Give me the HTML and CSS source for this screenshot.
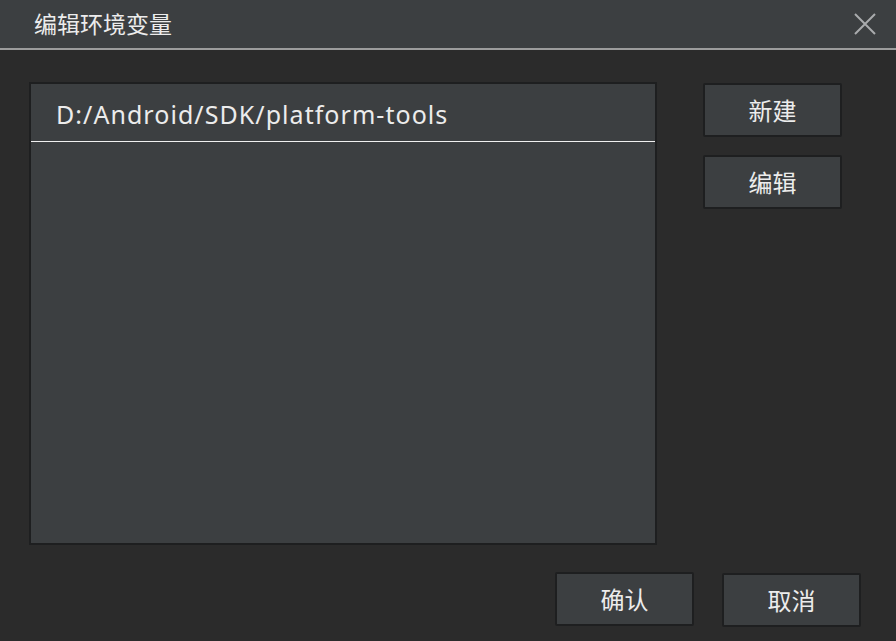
FILE: index.html
```html
<!DOCTYPE html>
<html lang="zh">
<head>
<meta charset="utf-8">
<link rel="stylesheet" href="styles.css">
</head>
<body>
<div class="dialog">
  <header class="titlebar">
    <span class="title">编辑环境变量</span>
    <svg class="close" width="22" height="22" viewBox="0 0 22 22"><path d="M1 1 L21 21 M21 1 L1 21" stroke="#a9abad" stroke-width="2" fill="none"/></svg>
  </header>
  <main class="body">
    <div class="list">
      <div class="row">D:/Android/SDK/platform-tools</div>
    </div>
    <div class="side">
      <button class="btn">新建</button>
      <button class="btn">编辑</button>
    </div>
  </main>
  <footer class="footer">
    <button class="btn">确认</button>
    <button class="btn btn-cancel">取消</button>
  </footer>
</div>
</body>
</html>
```
FILE: styles.css
```css
* { box-sizing: border-box; }
html, body { margin: 0; padding: 0; }
body {
  width: 896px;
  height: 641px;
  background: #2b2b2b;
  font-family: "Noto Sans CJK SC", "Noto Sans", sans-serif;
  color: #e6e6e6;
  overflow: hidden;
}
.dialog { display: flex; flex-direction: column; height: 641px; }
.titlebar {
  height: 50px;
  background: #3c3f41;
  border-bottom: 2px solid #9c9c9c;
  display: flex;
  align-items: center;
  justify-content: space-between;
  padding: 0 20px 2px 34px;
}
.title { font-size: 23px; color: #ececec; }
.close { display: block; margin-top: 2px; }
.body {
  display: flex;
  padding: 32px 0 0 29px;
  gap: 46px;
}
.list {
  width: 628px;
  height: 463px;
  background: #3c3f41;
  border: 2px solid #1e1f20;
}
.row {
  height: 58px;
  border-bottom: 1px solid #f0f0f0;
  padding: 3px 0 0 25px;
  font-family: "Noto Sans", sans-serif;
  font-size: 25px;
  letter-spacing: 1.05px;
  line-height: 54px;
  color: #ececec;
}
.side { display: flex; flex-direction: column; gap: 18px; padding-top: 1px; }
.btn {
  width: 139px;
  height: 54px;
  background: #3c3f41;
  border: 2px solid #1e1f20;
  border-radius: 2px;
  color: #ececec;
  font-family: "Noto Sans CJK SC", sans-serif;
  font-size: 24px;
  padding: 0 0 2px;
  display: flex;
  align-items: center;
  justify-content: center;
}
.footer {
  display: flex;
  justify-content: flex-end;
  gap: 28px;
  padding: 27px 35px 0 0;
  align-items: flex-start;
}
.btn-cancel { margin-top: 1px; }
```
